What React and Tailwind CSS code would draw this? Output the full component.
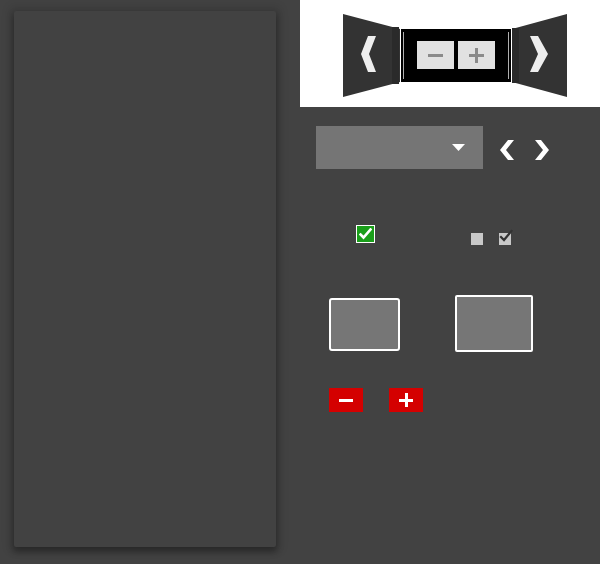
export default function App() {
  return (
    <div className="w-[600px] h-[564px] bg-[#424242] flex overflow-hidden">
      {/* Left panel column */}
      <div className="w-[300px] h-full pl-[14px] pt-[11px]">
        <div className="w-[262px] h-[536px] bg-[#424242] rounded-[2px] shadow-[0_0_8px_5px_rgba(0,0,0,0.1),0_4px_6px_1px_rgba(0,0,0,0.3)]" />
      </div>

      {/* Right column */}
      <div className="w-[300px] h-full flex flex-col">
        {/* White header with zoom widget */}
        <div className="h-[107px] bg-white pl-[43px] pt-[14px]">
          <div className="flex items-start">
            {/* Left wing */}
            <svg width="58" height="84" viewBox="0 0 58 84" className="block">
              <polygon points="0,0 57,15 57,68 0,83" fill="#333333" />
              <rect x="49" y="13" width="7" height="57" fill="#2a2a2a" />
              <polygon points="25,22 33,22 26,40 33,58 25,58 18,40" fill="#eeeeee" />
            </svg>
            {/* Center */}
            <div className="mt-[15px] w-[110px] h-[53px] bg-black flex items-center px-[2px]">
              <div className="w-[1px] h-[47px] bg-[#b0b0b0]" />
              <div className="flex-1 flex items-center justify-center gap-[4px] pb-[1px]">
                <div className="w-[37px] h-[28px] bg-[#e1e1e1] flex items-center justify-center">
                  <div className="w-[15px] h-[3px] bg-[#8a8a8a]" />
                </div>
                <div className="w-[37px] h-[28px] bg-[#e1e1e1] flex items-center justify-center relative">
                  <div className="w-[15px] h-[3px] bg-[#8a8a8a]" />
                  <div className="absolute w-[3px] h-[15px] bg-[#8a8a8a]" />
                </div>
              </div>
              <div className="w-[1px] h-[47px] bg-[#b0b0b0]" />
            </div>
            {/* Right wing */}
            <svg width="56" height="84" viewBox="0 0 56 84" className="block">
              <polygon points="1,15 56,0 56,83 1,68" fill="#333333" />
              <rect x="1" y="14" width="7" height="55" fill="#2a2a2a" />
              <polygon points="19,22 27,22 37,40 27,58 19,58 27,40" fill="#eeeeee" />
            </svg>
          </div>
        </div>

        {/* Select row */}
        <div className="flex items-center mt-[19px] pl-[16px]">
          <div className="w-[167px] h-[43px] bg-[#757575] flex items-center justify-end pr-[18px]">
            <svg width="13" height="7" viewBox="0 0 13 7">
              <polygon points="0,0 13,0 6.5,7" fill="#ffffff" />
            </svg>
          </div>
          <svg width="16" height="20" viewBox="0 0 16 20" className="ml-[16px] mt-[4px]">
            <polygon points="9,0 15,0 7,10 15,20 9,20 1,10" fill="#ffffff" />
          </svg>
          <svg width="16" height="20" viewBox="0 0 16 20" className="ml-[19px] mt-[4px]">
            <polygon points="1,0 7,0 15,10 7,20 1,20 9,10" fill="#ffffff" />
          </svg>
        </div>

        {/* Checkbox row */}
        <div className="flex items-start mt-[56px]">
          <div className="ml-[56px] w-[19px] h-[18px] bg-[#1a9e1a] border border-white flex items-center justify-center">
            <svg width="13" height="12" viewBox="0 0 13 12">
              <path d="M1.5 6.5 L4.5 9.5 L11.5 1.5" stroke="#ffffff" strokeWidth="2.6" fill="none" strokeLinecap="square" />
            </svg>
          </div>
          <div className="ml-[96px] mt-[8px] w-[12px] h-[12px] bg-[#c8c8c8]" />
          <div className="ml-[16px] mt-[8px] w-[12px] h-[12px] bg-[#c8c8c8] relative">
            <svg width="15" height="15" viewBox="0 0 15 15" className="absolute left-[0px] top-[-5px]">
              <path d="M2 9 L5 12 L12.5 3" stroke="#333333" strokeWidth="2.2" fill="none" strokeLinecap="square" />
            </svg>
          </div>
        </div>

        {/* Boxes row */}
        <div className="flex items-start mt-[50px]">
          <div className="ml-[29px] mt-[3px] w-[71px] h-[53px] bg-[#767676] border-2 border-white rounded-[3px]" />
          <div className="ml-[55px] w-[78px] h-[57px] bg-[#767676] border-2 border-white rounded-[2px]" />
        </div>

        {/* Red buttons */}
        <div className="flex items-start mt-[36px]">
          <div className="ml-[29px] w-[34px] h-[24px] bg-[#d40000] flex items-center justify-center">
            <div className="w-[14px] h-[3px] bg-white" />
          </div>
          <div className="ml-[26px] w-[34px] h-[24px] bg-[#d40000] flex items-center justify-center relative">
            <div className="w-[14px] h-[3px] bg-white" />
            <div className="absolute w-[3px] h-[14px] bg-white" />
          </div>
        </div>
      </div>
    </div>
  );
}
